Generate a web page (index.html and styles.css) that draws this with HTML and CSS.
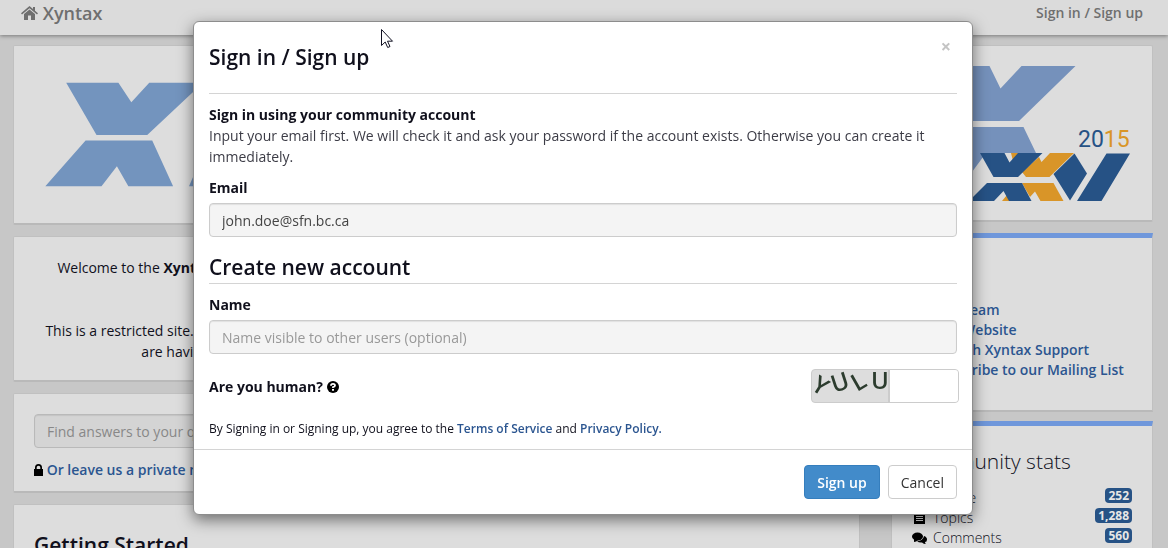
FILE: index.html
```html
<!DOCTYPE html>
<html lang="en">
<head>
  <meta charset="UTF-8">
  <meta name="viewport" content="width=device-width, initial-scale=1.0">
  <title>Xyntax Community</title>
  <link rel="stylesheet" href="styles.css">
</head>
<body>
  <nav class="navbar">
    <a class="brand" href="#">
      <svg width="17" height="14" viewBox="0 0 17 14"><path d="M8.500 0 12 3V1h2v3.700L17 7.300 16 8.500 8.500 2.200 1 8.500 0 7.300z"/><path d="M8.500 3.400 14 8v6h-4V9.500H7V14H3V8z"/></svg>
      Xyntax
    </a>
    <a class="login" href="#signin">Sign in / Sign up</a>
  </nav>

  <div class="container">
    <main>
      <section class="card">
        <svg class="banner" viewBox="14 46 845 178" preserveAspectRatio="xMinYMin meet">
          <path fill="#7394be" d="M66.500 83H119l13 19.500L150 83h54l-56 52.500H97zM86 141h67l21 46h-45l-11.500-20L102 187H45.500zM190 187l20-46h60l21 46z"/>
        </svg>
      </section>

      <section class="card welcome">
        <p>Welcome to the <b>Xyntax Community</b>, the place where our customers can ask questions and share ideas with others.</p>
        <p>This is a restricted site. Only the registered customers and partners of Xyntax are allowed to view all of its content. If you are having trouble signing in to your account, please contact Xyntax support team for help.</p>
      </section>

      <section class="card search">
        <input class="field" type="text" aria-label="Search" placeholder="Find answers to your questions">
        <p class="private">
          <svg width="9" height="12" viewBox="0 0 9 12"><path fill-rule="evenodd" d="M1 5V3.500a3.500 3.500 0 0 1 7 0V5h1v7H0V5zm1.700 0h3.600V3.500a1.800 1.800 0 0 0-3.600 0z"/></svg>
          <a href="#">Or leave us a private message</a>
        </p>
      </section>

      <section class="card start">
        <h2>Getting Started</h2>
        <p>Take a tour of the community.</p>
      </section>
    </main>

    <aside>
      <section class="card">
        <svg class="logo" viewBox="892 46 260 174" preserveAspectRatio="xMaxYMin meet">
          <path fill="#7591bb" d="M936 66h53.500l11 22.500 21-22.500h54L1019 121h-56zM952 127h71.500l12.500 26h-50l-14 19-20 29h-42z"/>
          <path fill="#d99528" d="M1011 153h8l-6 8zM1039 157l2.500 5 8.500-9h24l-24.500 24H1026l-4-5zM1022 183h31.500l10 18h-23l-5.500-9.500-5 5.500zM1002 201l5-6 3 6z"/>
          <path fill="#265285" d="M980 153h24.500l5 9.500 8.500-9.500h24.500l-24.500 24h-24.500zM987 183h35l9.500 18H1009l-5.500-10-9.500 10h-25zM1074.500 153.500l12.500 20-17 27-16.500-26.500zM1106.500 153.500h23.500L1101.500 201H1077z"/>
          <text class="year" x="1078" y="147">20<tspan fill="#d99528">15</tspan></text>
        </svg>
      </section>

      <section class="card panel">
        <h3>Links</h3>
        <ul class="links">
          <li><a href="#">Xyntax Team</a></li>
          <li><a href="#">Xyntax Website</a></li>
          <li><a href="#">Work with Xyntax Support</a></li>
          <li><a href="#">Re-subscribe to our Mailing List</a></li>
        </ul>
      </section>

      <section class="card panel">
        <h3>Community stats</h3>
        <ul class="stats">
          <li><svg width="15" height="14" viewBox="0 0 15 14"><circle cx="7.500" cy="4" r="3"/><path d="M2 13V9q5.500-3 11 0v4z"/></svg>People <span class="badge">252</span></li>
          <li><svg width="15" height="14" viewBox="0 0 15 14"><path fill-rule="evenodd" d="M2 2h9l2 2v9H2zm2 3v1h7V5zm0 2v1h7V7zm0 2v1h7V9z"/></svg>Topics <span class="badge">1,288</span></li>
          <li><svg width="15" height="14" viewBox="0 0 15 14"><ellipse cx="5.500" cy="5.500" rx="5.500" ry="4"/><path d="M2 8v3q2.500 0 4-2zM12 5q3 1 3 3.500T13 11q0 1.500 1 2-2.500 0-4-1.500-3 .5-5-1.500 6 0 7-5z"/></svg>Comments <span class="badge">560</span></li>
          <li><svg width="15" height="14" viewBox="0 0 15 14"><path d="M1 7l2-2 3 3 7-7 2 2-9 9z"/></svg>Votes <span class="badge">311</span></li>
        </ul>
      </section>
    </aside>
  </div>

  <div class="overlay" id="signin">
    <form class="modal" role="dialog" aria-labelledby="modal-title">
      <div class="modal-body">
        <div class="modal-header">
          <h4 id="modal-title">Sign in / Sign up</h4>
          <button type="button" class="close" aria-label="Close">×</button>
        </div>
        <p class="intro"><b>Sign in using your community account</b><br>
          Input your email first. We will check it and ask your password if the account exists. Otherwise you can create it immediately.</p>

        <label for="email">Email</label>
        <input class="field" type="email" id="email" value="john.doe@sfn.bc.ca">

        <h4 class="subtitle">Create new account</h4>

        <label for="name">Name</label>
        <input class="field" type="text" id="name" placeholder="Name visible to other users (optional)">

        <div class="human">
          <label for="captcha">Are you human?
            <svg width="12" height="12" viewBox="0 0 12 12"><circle cx="6" cy="6" r="6"/><path d="M4 4.700Q4 2.900 6 2.900t2 1.600Q8 5.500 6 6.200V7" fill="none" stroke="#fff" stroke-width="1.800"/><path fill="#fff" d="M5 8h2v1.800H5z"/></svg>
          </label>
          <div class="captcha">
            <svg width="76" height="32" viewBox="0 0 76 32">
              <text transform="translate(-2 19) rotate(32)">Y</text>
              <text transform="translate(22 23) rotate(-18)">U</text>
              <text transform="translate(45 22) rotate(-30)">L</text>
              <text transform="translate(59 19)">U</text>
            </svg>
            <input type="text" id="captcha">
          </div>
        </div>

        <p class="terms">By Signing in or Signing up, you agree to the <a href="#">Terms of Service</a> and <a href="#">Privacy Policy.</a></p>
      </div>
      <div class="modal-footer">
        <button type="submit" class="btn primary">Sign up</button>
        <button type="button" class="btn">Cancel</button>
      </div>
    </form>
  </div>

  <svg class="cursor" width="13" height="20" viewBox="0 0 13 20"><path d="M.5.5v16l3.700-3.500 2.500 5.500 2.300-1-2.500-5.300h5z" fill="#fff" stroke="#111122"/></svg>
</body>
</html>
```

FILE: styles.css
```css
* {
  box-sizing: border-box;
}
html, body {
  height: 100%;
}
body {
  margin: 0;
  overflow: hidden;
  background: #c7c7c7;
  color: #10101c;
  font-family: "Open Sans", sans-serif;
  font-size: 14px;
  line-height: 21px;
}
h2, h3, h4, p, ul {
  margin: 0;
  padding: 0;
}
ul {
  list-style: none;
}
b, label {
  font-weight: 700;
}
a {
  color: #2b5590;
  font-weight: 600;
  text-decoration: none;
}
a:hover {
  text-decoration: underline;
}

/* page */
.navbar {
  display: flex;
  justify-content: space-between;
  height: 35px;
  padding: 0 25px 0 21px;
  background: #dbdbdb;
  box-shadow: 0 1px 4px rgba(0, 0, 0, .4);
}
.navbar a {
  color: #6f6f6f;
  line-height: 26px;
}
.navbar .brand {
  font-size: 18px;
}
.brand svg {
  fill: #6f6f6f;
}
.container {
  display: grid;
  grid-template-columns: 1fr 262px;
  gap: 31px;
  padding: 10px 15px 0 13px;
}
.card {
  margin-bottom: 11px;
  background: #ddd;
  border: 1px solid #c0c0c0;
  border-bottom: 2px solid #b9b9b9;
  border-radius: 2px;
}
.banner, .logo {
  display: block;
  width: 100%;
  height: 177px;
}
.logo {
  height: 174px;
}
.year {
  fill: #265285;
  font-family: Roboto, sans-serif;
  font-size: 23px;
}
.welcome {
  padding: 20px 30px 18px;
  text-align: center;
}
.welcome p + p {
  margin-top: 42px;
}
.search {
  padding: 20px 20px 11px;
}
.search .field {
  background: #d4d4d4;
  border-color: #b9b9b9;
}
.private {
  margin-top: 11px;
}
.private svg {
  vertical-align: -1px;
}
.start {
  padding: 25px 20px;
}
.start h2 {
  font-size: 21px;
  font-weight: 600;
  line-height: 31px;
}
.panel {
  padding: 20px 20px 30px;
  border-top: 5px solid #6f97db;
  border-radius: 0;
}
.panel + .panel {
  margin-top: -2px;
}
.panel h3 {
  margin-bottom: 11px;
  font-size: 21px;
  font-weight: 300;
  line-height: 31px;
}
.panel li {
  line-height: 20px;
}
.stats li {
  display: flex;
  align-items: center;
  height: 20px;
  font-weight: 300;
}
.stats svg {
  margin-right: 6px;
}
.badge {
  margin: 0 0 6px auto;
  padding: 0 3px;
  background: #265285;
  border-radius: 4px;
  color: #e6e6e6;
  font-size: 12px;
  font-weight: 700;
  line-height: 15px;
}

/* form controls */
.field {
  display: block;
  width: 100%;
  height: 34px;
  padding: 6px 12px;
  background: #f4f4f4;
  border: 1px solid #ccc;
  border-radius: 4px;
  box-shadow: inset 0 1px 1px rgba(0, 0, 0, .08);
  color: #444;
  font: inherit;
}
::placeholder {
  color: #999;
  opacity: 1;
}
.search ::placeholder {
  color: #888;
}
.btn {
  height: 34px;
  padding: 0 12px;
  background: #fff;
  border: 1px solid #ccc;
  border-radius: 4px;
  color: #333;
  font: inherit;
  cursor: pointer;
}
.btn.primary {
  background: #428bca;
  border-color: #357ebd;
  color: #fff;
  font-weight: 600;
}

/* sign in dialog */
.overlay {
  position: fixed;
  inset: 0;
  padding: 21px 2px 0 0;
}
.modal {
  max-width: 780px;
  margin: 0 auto;
  background: #fff;
  border: 1px solid #8d8d8d;
  border-radius: 6px;
  box-shadow: 0 5px 15px rgba(0, 0, 0, .5);
}
.modal-body {
  padding: 15px 15px 10px;
}
.modal-header {
  display: flex;
  justify-content: space-between;
  align-items: flex-start;
  margin-bottom: 10px;
  padding-bottom: 15px;
  border-bottom: 1px solid #d4d4d4;
}
.modal h4 {
  font-size: 21px;
  font-weight: 600;
  line-height: 41px;
}
.close {
  padding: 0 6px;
  background: none;
  border: 0;
  color: #c4c4c4;
  font: 700 18px/18px "Open Sans", sans-serif;
  cursor: pointer;
}
.intro {
  margin-bottom: 10px;
  color: #3c3c46;
}
.intro b {
  color: #10101c;
}
.modal label {
  display: block;
  margin-bottom: 5px;
}
.modal .subtitle {
  margin: 15px 0 10px;
  border-bottom: 1px solid #d4d4d4;
  line-height: 31px;
}
.human {
  display: flex;
  align-items: center;
  justify-content: space-between;
  margin: 15px -2px 15px 0;
}
.human label {
  margin: 0;
}
.human label svg {
  vertical-align: -1px;
}
.captcha {
  display: flex;
  width: 148px;
  height: 34px;
  background: #ddd;
  border: 1px solid #ccc;
  border-radius: 4px;
}
.captcha text {
  fill: #2c3c2e;
  font-family: "Open Sans", sans-serif;
  font-size: 24px;
  font-weight: 600;
}
.captcha input {
  flex: 1;
  min-width: 0;
  border: 0;
  border-left: 2px solid #ccc;
  border-radius: 0 3px 3px 0;
  font: inherit;
}
.terms {
  font-size: 12px;
}
.modal-footer {
  display: flex;
  justify-content: flex-end;
  gap: 8px;
  padding: 15px;
  border-top: 1px solid #d4d4d4;
}
.cursor {
  position: fixed;
  top: 29px;
  left: 381px;
}
```
